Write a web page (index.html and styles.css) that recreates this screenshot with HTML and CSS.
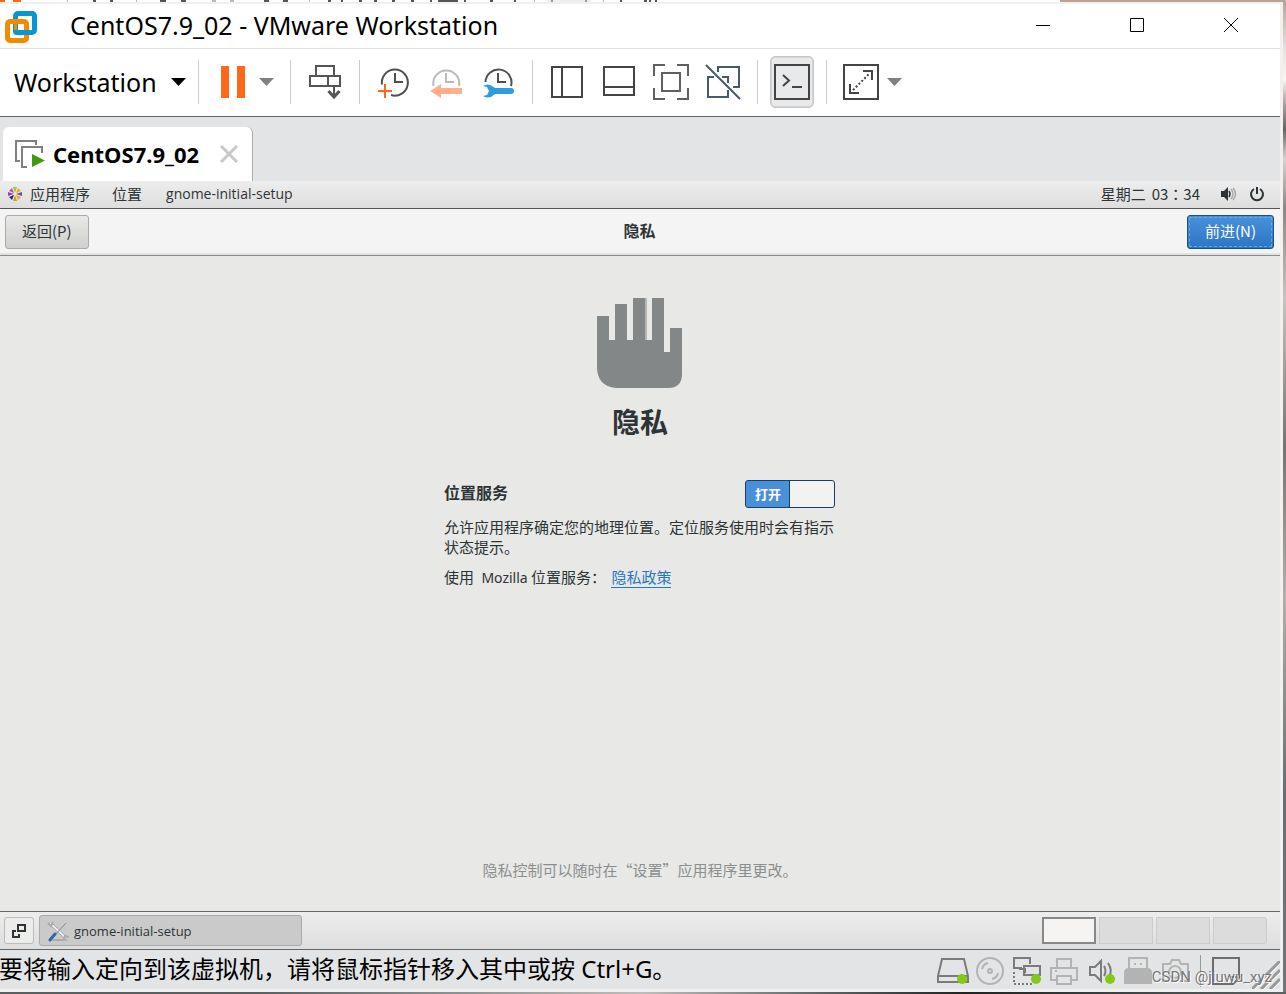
FILE: index.html
```
<!DOCTYPE html>
<html lang="zh-CN">
<head>
<meta charset="utf-8">
<title>CentOS7.9_02 - VMware Workstation</title>
<link rel="stylesheet" href="styles.css">
</head>
<body>
<svg class="strip" height="2" aria-hidden="true">
  <rect width="1060" height="2" fill="#fff"/>
  <path d="M0 1h5M13 1h8" stroke="#ff671b" stroke-width="2"/>
  <path d="M93 1h3M110 1h3M160 1h6M181 1h5M264 1h5M283 1h5M328 1h3M341 1h2M359 1h3M374 1h3M392 1h3M411 1h3M430 1h2M438 1h20M464 1h2M551 1h2M585 1h2M620 1h2M644 1h3M649 1h2M655 1h2" stroke="#555" stroke-width="2"/>
  <path d="M490 1h3M514 1h2" stroke="#465a69" stroke-width="2"/>
  <path d="M67 1h1M136 1h1M212 1h4M230 1h4M309 1h1M534 1h1M603 1h1" stroke="#bbb" stroke-width="2"/>
  <path d="M547 1h44" stroke="#ddd" stroke-width="1"/>
</svg>
<div class="window">
  <header class="titlebar">
    <svg class="logo" width="32" height="32" viewBox="0 0 32 32" fill="none" stroke-width="5">
      <rect x="10.5" y="2.5" width="19" height="19" rx="2.5" stroke="#0795d3"/>
      <rect x="2.500" y="10.500" width="19" height="19" rx="2.500" stroke="#f38b00"/>
      <path d="M10.500 13v7q0 1.500 1.500 1.500h13" stroke="#0795d3"/>
      <rect x="13" y="13" width="6" height="6" rx="1" fill="#fff"/>
      <path d="M10 10.500h10" stroke="#f38b00"/>
      <path d="M10.500 12v7" stroke="#f38b00" stroke-width="3"/>
    </svg>
    <h1 class="title">CentOS7.9_02 - VMware Workstation</h1>
    <div class="caption">
      <button class="cap" aria-label="Minimize"><svg width="16" height="16" viewBox="0 0 16 16"><path d="M1 8.500h14"/></svg></button>
      <button class="cap" aria-label="Maximize"><svg width="16" height="16" viewBox="0 0 16 16"><path d="M1.500 1.500h13v13h-13z"/></svg></button>
      <button class="cap" aria-label="Close"><svg width="16" height="16" viewBox="0 0 16 16"><path d="M1 1l14 14M15 1L1 15"/></svg></button>
    </div>
  </header>

  <nav class="toolbar" aria-label="Toolbar">
    <button class="menu">Workstation<svg width="15" height="8" viewBox="0 0 15 8"><path d="M0 0h15L7.500 8z" fill="#000"/></svg></button>
    <div class="group tight">
      <button class="tool" aria-label="Suspend"><svg width="36" height="36" viewBox="0 0 36 36"><path d="M6 2h8v32H6zM22 2h8v32h-8z" fill="#ff671b"/></svg></button>
      <button class="arrow" aria-label="Power options"><svg width="15" height="8" viewBox="0 0 15 8"><path d="M0 0h15L7.500 8z" fill="#808080"/></svg></button>
    </div>
    <div class="group">
      <button class="tool" aria-label="Send Ctrl+Alt+Del"><svg width="36" height="36" viewBox="0 0 36 36" fill="none" stroke="#555" stroke-width="2"><path d="M9 12V2h18v10M3 12h30v10H3zM21 12v10M27 22v11"/><path d="M21.500 27l5.500 6 5.500-6" stroke-width="3"/></svg></button>
    </div>
    <div class="group">
      <button class="tool" aria-label="Take snapshot"><svg width="36" height="36" viewBox="0 0 36 36" fill="none" stroke="#4f4f4f" stroke-width="2"><path d="M6 20.500A13 13 0 1 1 15 31M19 9v9h8"/><path d="M2 27h14M9 20v14" stroke="#ff671b"/></svg></button>
      <button class="tool" aria-label="Revert snapshot"><svg width="36" height="36" viewBox="0 0 36 36" fill="none" stroke="#bbb" stroke-width="2"><path d="M5.500 22A13 13 0 1 1 31 22M18 9v9h8"/><path d="M2 27l11-7v4h21v6H13v4z" fill="#ffb08a" stroke="none"/></svg></button>
      <button class="tool" aria-label="Manage snapshots"><svg width="36" height="36" viewBox="0 0 36 36" fill="none" stroke="#4f4f4f" stroke-width="2"><path d="M5.500 18A13 13 0 1 1 31 22M18 9v9h8"/><path d="M3 22q6-4 12 2h16q3 0 3 3t-3 3H15q-6 6-12 2l4-1 2-4-2-4z" fill="#2d9ce0" stroke="none"/></svg></button>
    </div>
    <div class="group">
      <button class="tool" aria-label="Show library"><svg width="36" height="36" viewBox="0 0 36 36" fill="none" stroke="#444" stroke-width="2"><path d="M3 3h30v30H3zM13 3v30"/></svg></button>
      <button class="tool" aria-label="Show thumbnails"><svg width="36" height="36" viewBox="0 0 36 36" fill="none" stroke="#444" stroke-width="2"><path d="M3 3h30v28H3zM3 23h30"/></svg></button>
      <button class="tool" aria-label="Full screen"><svg width="36" height="36" viewBox="0 0 36 36" fill="none" stroke="#606060" stroke-width="2"><path d="M1 12V1h11M24 1h11v11M35 24v11H24M12 35H1V24M9 9h18v18H9z"/></svg></button>
      <button class="tool" aria-label="Unity mode"><svg width="36" height="36" viewBox="0 0 36 36" fill="none" stroke="#465a69" stroke-width="2"><path d="M13 8V3h21v20h-6M9 13H3v20h20v-7M17 13h6v6M1 1l34 34"/></svg></button>
    </div>
    <div class="group console">
      <button class="tool active" aria-label="Console view"><svg width="36" height="36" viewBox="0 0 36 36" fill="none" stroke="#444" stroke-width="2"><path d="M1 1h34v34H1zM9 11l6 5.500L9 22M18 23h10"/></svg></button>
    </div>
    <div class="group tight">
      <button class="tool" aria-label="Free stretch"><svg width="36" height="36" viewBox="0 0 36 36" fill="none" stroke="#444" stroke-width="2"><path d="M1 1h34v34H1zM20 7h9v9M7 20v9h9"/><path d="M10 26L27 9" stroke-dasharray="2 2"/></svg></button>
      <button class="arrow" aria-label="Stretch options"><svg width="15" height="8" viewBox="0 0 15 8"><path d="M0 0h15L7.500 8z" fill="#808080"/></svg></button>
    </div>
  </nav>

  <div class="tabs">
    <div class="tab">
      <svg width="30" height="30" viewBox="0 0 30 30" fill="none" stroke="#808080" stroke-width="2"><path d="M5 22H1V2h20v4M12 28H7V8h20v6"/><path d="M17 15l13 6.500L17 28z" fill="#3f9c0f" stroke="none"/></svg>
      <span class="tabname">CentOS7.9_02</span>
      <button class="close" aria-label="Close tab"><svg width="18" height="18" viewBox="0 0 18 18" fill="none" stroke="#c8c8c8" stroke-width="3"><path d="M1 1l16 16M17 1L1 17"/></svg></button>
    </div>
  </div>

  <div class="guest">
    <div class="panel">
      <svg class="apps" width="14" height="14" viewBox="0 0 14 14"><path d="M5 0h4L7 6z" fill="#9ccd2a"/><path d="M10 1l3 3-5 2z" fill="#efa724"/><path d="M14 5v4L8 7z" fill="#6a4fa0"/><path d="M13 10l-3 3-2-5z" fill="#efa724"/><path d="M9 14H5l2-6z" fill="#c9a227"/><path d="M4 13l-3-3 5-2z" fill="#262577"/><path d="M0 9V5l6 2z" fill="#9a3fb0"/><path d="M1 4l3-3 2 5z" fill="#c64fa0"/></svg>
      <span class="apptext">应用程序</span>
      <span class="places">位置</span>
      <span class="latin">gnome-initial-setup</span>
      <time class="clock" lang="zh-TW"><span>星期二</span><span>03：34</span></time>
      <svg class="vol" width="17" height="16" viewBox="0 0 17 16" fill="none" stroke-width="1.500"><path d="M1 5h3l4-4v14l-4-4H1z" fill="#2e3436"/><path d="M9 5q2 3 0 6" stroke="#2e3436"/><path d="M11 3q4 5 0 10M13 2q5 6 0 12" stroke="#aaa"/></svg>
      <svg width="16" height="16" viewBox="0 0 16 16" fill="none" stroke="#2e3436" stroke-width="2"><path d="M5 3A6 6 0 1 0 11 3M8 1v7"/></svg>
    </div>
    <div class="head">
      <button class="btn">返回(P)</button>
      <h2 class="headtitle">隐私</h2>
      <button class="btn primary">前进(N)</button>
    </div>
    <main class="page">
      <svg class="hand" width="88" height="92" viewBox="0 0 88 92"><path d="M1 19h12v24h6V7h12v36h6V1h12v42h7V1h12v54h6V31h12v46q0 14-14 14H20Q1 89 1 70z" fill="#838787"/><path d="M50 1v42" stroke="#b5b7b6" stroke-width="2"/></svg>
      <h3 class="big">隐私</h3>
      <section class="form">
        <div class="row">
          <label class="label" for="loc">位置服务</label>
          <span class="switch"><input id="loc" type="checkbox" role="switch" checked><span class="on">打开</span></span>
        </div>
        <p class="desc">允许应用程序确定您的地理位置。定位服务使用时会有指示状态提示。</p>
        <p class="policy">使用 <span class="moz">Mozilla</span> 位置服务： <a href="#privacy">隐私政策</a></p>
      </section>
      <p class="note">隐私控制可以随时在“设置”应用程序里更改。</p>
    </main>
    <footer class="taskbar">
      <button class="show" aria-label="Show desktop"><svg width="16" height="16" viewBox="0 0 16 16" fill="none" stroke="#2e3436" stroke-width="2"><path d="M7 2h7v6H7zM5 8H2v6h6v-3"/></svg></button>
      <button class="task"><svg width="22" height="22" viewBox="0 0 22 22" fill="none"><ellipse cx="12" cy="20" rx="9" ry="1" fill="#aaa"/><path d="M3 3l16 15" stroke="#888" stroke-width="3"/><path d="M3 3l16 15" stroke="#eee" stroke-width="2"/><path d="M1 3l3 3 2-4M17 20l1-4 4 1" stroke="#aaa" stroke-width="2"/><path d="M19 3L9 14" stroke="#888"/><path d="M8 14l-5 6" stroke="#3465a4" stroke-width="3" stroke-linecap="round"/></svg><span>gnome-initial-setup</span></button>
      <div class="spaces"><button class="space current" aria-label="Workspace 1"></button><button class="space" aria-label="Workspace 2"></button><button class="space" aria-label="Workspace 3"></button><button class="space" aria-label="Workspace 4"></button></div>
    </footer>
  </div>

  <div class="status">
    <span class="hint">要将输入定向到该虚拟机，请将鼠标指针移入其中或按 Ctrl+G。</span>
    <div class="devices">
      <svg width="32" height="32" viewBox="0 0 32 32" fill="none" stroke="#7b7b7b" stroke-width="2"><path d="M5 4h22l4 17v6H1v-6zM1 21h30"/><circle cx="25" cy="24" r="5" fill="#84c91a" stroke="none"/></svg>
      <svg width="32" height="32" viewBox="0 0 32 32" fill="none" stroke="#b3b3b3" stroke-width="2"><circle cx="16" cy="16" r="13"/><circle cx="16" cy="16" r="2"/><path d="M8 14q1-5 6-6M24 18q-1 5-6 6"/></svg>
      <svg width="32" height="32" viewBox="0 0 32 32" fill="none" stroke="#7b7b7b" stroke-width="2"><path d="M11 13H3V3h16v6M13 11h16v9H13zM8 14h6v4"/><path d="M3 17v12h18" stroke-dasharray="2 2"/><circle cx="25" cy="24" r="5" fill="#84c91a" stroke="none"/></svg>
      <svg width="32" height="32" viewBox="0 0 32 32" fill="none" stroke="#b3b3b3" stroke-width="2"><path d="M9 13V4h14v9M9 25H3V13h26v12h-6M9 21h14v8H9zM7 16h2"/></svg>
      <svg width="32" height="32" viewBox="0 0 32 32" fill="none" stroke="#7b7b7b" stroke-width="2"><path d="M5 12h5l6-6v20l-6-6H5zM19 11q3 5 0 10M23 8q5 8 1 13"/><circle cx="25" cy="24" r="5" fill="#84c91a" stroke="none"/></svg>
      <svg width="32" height="32" viewBox="0 0 32 32"><path d="M7 14V3h18v11" fill="none" stroke="#b3b3b3" stroke-width="2"/><path d="M2 18q0-5 5-5h18q5 0 5 5v11H2zM12 8h2v2h-2zM18 8h2v2h-2z" fill="#b3b3b3"/></svg>
      <svg width="32" height="32" viewBox="0 0 32 32" fill="none" stroke="#b3b3b3" stroke-width="2"><path d="M4 9h7l2-4h7l2 4h7v17H4z"/><circle cx="16" cy="17" r="6"/></svg>
      <svg class="message" width="32" height="32" viewBox="0 0 32 32" fill="none" stroke="#6d6d6d" stroke-width="2"><path d="M3 3h26v20l-6 6H3zM22 28v-6h6"/></svg>
    </div>
    <svg class="grip" width="28" height="28" viewBox="0 0 28 28" stroke="#999" stroke-width="3"><path d="M0 28L28 0M9 28L28 9M18 28l10-10"/><path d="M3 28L28 3M12 28l16-16M21 28l7-7" stroke="#fff" stroke-width="1"/></svg>
  </div>
</div>
<div class="watermark">CSDN @jiuwu_xyz</div>
</body>
</html>
```
FILE: styles.css
```
* { box-sizing: border-box; }
body {
  margin: 0;
  min-height: 100vh;
  display: flex;
  flex-direction: column;
  position: relative;
  padding: 0 3px 2px 0;
  overflow: hidden;
  color: #2e3436;
  font-family: "Noto Sans", "Noto Sans CJK SC", sans-serif;
  background:
    linear-gradient(90deg, #59605f 0 20%, #8b9190 35%, #c0bcba 50%, #55605f 65%, #222 75%, #5b6463) bottom / 100% 2px no-repeat,
    linear-gradient(#b9a293, #e9e3dc 5%, #faf6f0 8%, #b8ada6 10%, #686560 13%, #d9d2ca 16%, #8c8782 21%, #c9c3bc 30%, #77736e 45%, #b5aea7 60%, #65706f 80%, #6d7877);
}
button { border: 0; margin: 0; padding: 0; background: none; font: inherit; color: inherit; }
svg { display: block; flex: none; }
h1, h2, h3, p { margin: 0; }
.strip { width: 100%; }
.window {
  flex: 1;
  display: flex;
  flex-direction: column;
  background: #fff;
  border-right: 3px solid #f0f0f0;
  border-bottom: 3px solid #f0f0f0;
  border-top: 2px solid #f0f0f0;
}
.titlebar { display: flex; align-items: center; height: 45px; border-bottom: 1px solid #e0e0e0; padding-left: 5px; }
.logo { margin-top: 2px; }
.title { font-size: 25px; font-weight: 400; color: #000; margin-left: 33px; line-height: 44px; padding-bottom: 2px; }
.caption { margin-left: auto; padding-right: 2px; display: flex; }
.cap { width: 94px; height: 44px; padding-bottom: 2px; display: grid; place-items: center; }
.cap svg { fill: none; stroke: #000; stroke-width: 1; }

.toolbar { display: flex; align-items: center; height: 68px; padding-bottom: 2px; color: #000; border-bottom: 1px solid #666; }
.menu { display: flex; align-items: center; gap: 14px; padding: 0 12px 0 14px; font-size: 25px; line-height: 44px; }
.group { display: flex; align-items: center; gap: 16px; height: 44px; padding: 0 16px; border-left: 1px solid #ccc; }
.group.tight { gap: 8px; }
.group.console { padding: 0 12px; }
.active { padding: 7px 3px; border: 1px solid #c8c8c8; border-radius: 5px; background: #e8e9eb; box-shadow: inset 0 0 0 1px #d4d4d4; }

.tabs { background: #e3e4e6; padding: 10px 2px 0 3px; display: flex; }
.tab { display: flex; align-items: center; height: 54px; padding: 0 14px 0 12px; background: #fff; border-right: 1px solid #aaa; border-radius: 6px 6px 0 0; color: #000; }
.tabname { font: bold 22px/30px "Noto Sans", sans-serif; margin: 0 21px 0 8px; }

.guest { flex: 1; display: flex; flex-direction: column; background: #e8e8e6; font-family: "Noto Sans CJK SC", sans-serif; font-size: 15px; }
.panel { display: flex; align-items: center; height: 28px; padding: 0 15px 2px 8px; background: linear-gradient(#ededed, #dedede); border-bottom: 1px solid #555; }
.apptext { margin: 0 22px 0 8px; }
.places { margin-right: 24px; }
.latin { font: 14px/20px "Open Sans", sans-serif; }
.clock { margin-left: auto; display: flex; gap: 6px; font-family: "Noto Sans CJK TC", sans-serif; }
.vol { margin: 0 12px 0 20px; }
.head { display: grid; grid-template-columns: 1fr auto 1fr; align-items: center; height: 47px; padding: 0 6px 0 5px; background: #f4f4f4; border-bottom: 1px solid #8a8a8a; box-shadow: inset 0 -2px #e2e2e0; }
.btn { justify-self: start; height: 34px; padding: 0 16px 4px; border: 1px solid #aaa; border-radius: 3px; background: linear-gradient(#e8e8e7, #cfcfcd); }
.primary { justify-self: end; padding: 0 17px 4px; color: #fff; border-color: #1c5187; background: linear-gradient(#4a90d9, #2a76c6); outline: 1px dashed #6da4de; outline-offset: -3px; }
.headtitle { font-size: 16px; line-height: 24px; padding-bottom: 4px; }
.page { flex: 1; display: flex; flex-direction: column; align-items: center; padding: 41px 16px 29px; }
.big { font-size: 28px; line-height: 40px; margin: 12px 0 39px; }
.form { width: 392px; }
.row { display: flex; align-items: center; justify-content: space-between; height: 28px; padding-right: 1px; }
.label { font-size: 16px; font-weight: 700; line-height: 24px; padding-bottom: 4px; }
.switch { display: grid; width: 90px; height: 28px; }
.switch input {
  grid-area: 1 / 1;
  appearance: none;
  margin: 0;
  border: 1px solid #16406c;
  border-radius: 3px;
  background: linear-gradient(90deg, #4a90d9 0 43px, #16406c 43px 44px, #f2f2f1 44px);
}
.on { grid-area: 1 / 1; align-self: center; padding-left: 10px; color: #fff; font-size: 13px; font-weight: 700; line-height: 20px; pointer-events: none; }
.desc { line-height: 20px; margin-top: 9px; }
.policy { line-height: 20px; margin-top: 10px; }
.moz { font: 14px/20px "Noto Sans", sans-serif; margin-left: 4px; }
.policy a { color: #2a76c6; text-decoration: none; border-bottom: 1px solid #2a76c6; margin-left: 2px; }
.note { margin-top: auto; color: #8b8e8f; line-height: 24px; }
.taskbar { display: flex; align-items: center; height: 39px; padding: 0 13px 0 4px; border-top: 1px solid #666; border-bottom: 1px solid #666; background: linear-gradient(#ededed, #dedede); }
.show { display: grid; place-items: center; width: 30px; height: 27px; border: 1px solid #bbb; border-radius: 3px; background: #ececeb; }
.task { display: flex; align-items: center; gap: 5px; width: 263px; height: 31px; margin-left: 5px; padding-left: 7px; border: 1px solid #aaa; border-radius: 3px; background: #cacaca; font: 13px/20px "Open Sans", sans-serif; }
.spaces { margin-left: auto; display: flex; gap: 3px; }
.space { width: 54px; height: 27px; border: 1px solid #ccc; background: #dcdcdc; }
.space:last-child { border-radius: 0 3px 3px 0; }
.current { border: 2px solid #888; background: #f5f4f2; }

.status { display: flex; align-items: center; height: 39px; background: #e3e4e6; color: #000; position: relative; }
.hint { font: 24px/36px "Noto Sans", "Noto Sans CJK SC", sans-serif; margin-left: -1px; padding-bottom: 1px; }
.devices { margin-left: auto; display: flex; gap: 5px; align-items: center; padding: 2px 38px 0 0; }
.message { margin-left: 4px; border-left: 1px solid #999; padding-left: 9px; width: 42px; }
.grip { position: absolute; right: 0; bottom: 0; }
.watermark { position: absolute; right: 14px; bottom: 8px; font: 15px/18px Roboto, sans-serif; color: #777; text-shadow: 1px 1px #fff; }
```
